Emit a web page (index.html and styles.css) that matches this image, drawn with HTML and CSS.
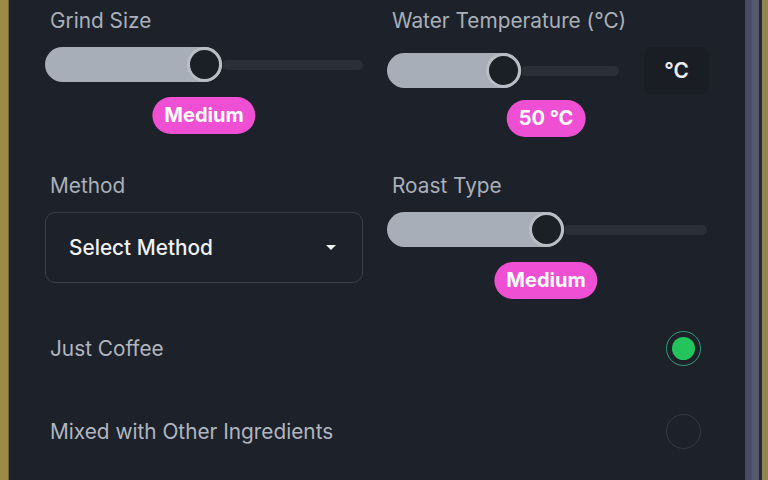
FILE: index.html
```html
<!DOCTYPE html>
<html lang="en">
<head>
<meta charset="utf-8">
<title>Brew Settings</title>
<link rel="stylesheet" href="styles.css">
</head>
<body>
<div class="frame">
  <div class="edge-left"></div>
  <main class="panel">
    <div class="grid">
      <section class="field">
        <div class="label">Grind Size</div>
        <div class="slider">
          <div class="fill" style="width:177px"><span class="thumb"></span></div>
          <div class="rest"></div>
        </div>
        <div class="badge-row"><span class="badge" style="left:159px">Medium</span></div>
      </section>
      <section class="field">
        <div class="label">Water Temperature (°C)</div>
        <div class="temp-row">
          <div class="slider">
            <div class="fill" style="width:134px"><span class="thumb"></span></div>
            <div class="rest"></div>
          </div>
          <div class="unit">°C</div>
        </div>
        <div class="badge-row tight"><span class="badge" style="left:159px">50 °C</span></div>
      </section>
      <section class="field">
        <div class="label">Method</div>
        <div class="select">
          <span>Select Method</span>
          <span class="caret"></span>
        </div>
      </section>
      <section class="field">
        <div class="label">Roast Type</div>
        <div class="slider narrow">
          <div class="fill" style="width:177px"><span class="thumb"></span></div>
          <div class="rest"></div>
        </div>
        <div class="badge-row"><span class="badge" style="left:159px">Medium</span></div>
      </section>
    </div>
    <div class="options">
      <div class="option">
        <span class="option-label">Just Coffee</span>
        <span class="radio checked"><span class="dot"></span></span>
      </div>
      <div class="option">
        <span class="option-label">Mixed with Other Ingredients</span>
        <span class="radio"></span>
      </div>
    </div>
  </main>
  <div class="scrollbar"></div>
  <div class="edge-dark"></div>
  <div class="edge-right"></div>
</div>
</body>
</html>
```
FILE: styles.css
```css
* { box-sizing: border-box; }
html, body { margin: 0; padding: 0; height: 100%; overflow: hidden; }
body {
  font-family: Inter, "Noto Sans", "Liberation Sans", sans-serif;
  background: #1d2129;
  color: #aab1bb;
}
.frame { display: flex; height: 480px; }
.edge-left { width: 9px; background: #9c8a47; border-right: 1px solid #6f6436; }
.panel { flex: 1; background: #1d2129; padding: 9px 36px 0 36px; }
.scrollbar { width: 14px; background: linear-gradient(90deg, #484b62 0, #4a4d65 50%, #55586e 50%, #55586e 100%); }
.edge-dark { width: 3px; background: #262836; }
.edge-right { width: 6px; background: #8f8550; }

.grid {
  display: grid;
  grid-template-columns: 318px 1fr;
  column-gap: 24px;
  row-gap: 37px;
}
.label {
  font-size: 20.8px;
  line-height: 24px;
  padding-left: 5px;
  color: #a9b0ba;
}
.slider {
  position: relative;
  display: flex;
  align-items: center;
  height: 35px;
  margin-top: 14px;
}
.slider.narrow { margin-right: 2px; }
.fill {
  position: relative;
  height: 35px;
  border-radius: 18px;
  background: #a8aeb8;
  flex: none;
}
.thumb {
  position: absolute;
  right: 0;
  top: 0;
  width: 35px;
  height: 35px;
  border-radius: 50%;
  background: #1b1f26;
  border: 3px solid #b9bec6;
}
.rest {
  flex: 1;
  height: 10px;
  border-radius: 5px;
  background: #2a2f38;
}
.temp-row {
  display: flex;
  align-items: center;
  gap: 25px;
  margin-top: 14px;
  height: 47px;
}
.temp-row .slider { flex: 1; margin-top: 0; }
.unit {
  width: 65px;
  height: 47px;
  border-radius: 8px;
  background: #1a1d23;
  color: #eceef1;
  font-size: 20.8px;
  font-weight: 600;
  display: flex;
  align-items: center;
  justify-content: center;
}
.badge-row { position: relative; height: 37px; margin-top: 15px; }
.badge-row.tight { margin-top: 6px; }
.badge {
  position: absolute;
  top: 0;
  transform: translateX(-50%);
  height: 37px;
  line-height: 37px;
  padding: 0 12px;
  border-radius: 19px;
  background: #ef50d3;
  color: #ffffff;
  font-weight: 700;
  font-size: 20px;
  white-space: nowrap;
}
.select {
  margin-top: 14px;
  height: 71px;
  border: 1px solid #393e48;
  border-radius: 10px;
  display: flex;
  align-items: center;
  justify-content: space-between;
  padding: 0 26px 0 23px;
  color: #f1f2f4;
  font-size: 20.8px;
  font-weight: 500;
}
.caret {
  width: 0;
  height: 0;
  border-left: 5px solid transparent;
  border-right: 5px solid transparent;
  border-top: 5px solid #f1f2f4;
}
.options {
  margin-top: 32px;
  display: flex;
  flex-direction: column;
  gap: 48px;
  padding-right: 8px;
}
.option {
  display: flex;
  align-items: center;
  justify-content: space-between;
  height: 35px;
}
.option-label {
  font-size: 20.8px;
  padding-left: 5px;
  color: #b0b6c0;
}
.radio {
  width: 35px;
  height: 35px;
  border-radius: 50%;
  border: 1.5px solid #353a45;
  display: flex;
  align-items: center;
  justify-content: center;
}
.radio.checked { border-color: #30a079; }
.dot { width: 23px; height: 23px; border-radius: 50%; background: #23c45c; }
```
